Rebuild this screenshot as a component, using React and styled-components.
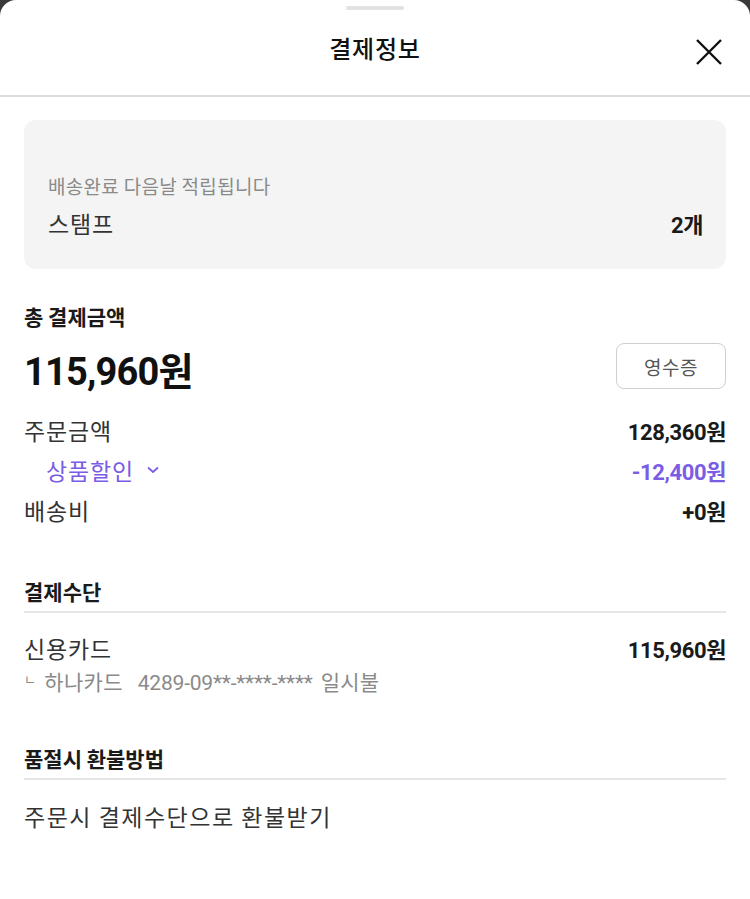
import React from 'react';
import styled, { createGlobalStyle } from 'styled-components';

const GlobalStyle = createGlobalStyle`
  html, body {
    margin: 0;
    padding: 0;
    background: #3a3a3a;
  }
  body {
    font-family: 'Noto Sans CJK KR', 'Noto Sans', sans-serif;
    color: #222;
  }
`

const Sheet = styled.div`
  background: #fff;
  border-radius: 16px 16px 0 0;
  min-height: 899px;
  box-sizing: border-box;
`

const HandleBar = styled.div`
  display: flex;
  justify-content: center;
  padding-top: 6px;
  height: 14px;
  box-sizing: border-box;
`

const Handle = styled.div`
  width: 58px;
  height: 4px;
  border-radius: 2px;
  background: #e2e2e2;
`

const Header = styled.div`
  position: relative;
  display: flex;
  align-items: center;
  justify-content: center;
  height: 81px;
  border-bottom: 2px solid #dcdcdc;
`

const Title = styled.h1`
  margin: 0 0 14px;
  font-size: 24px;
  letter-spacing: 0.8px;
  font-weight: 500;
  color: #111;
`

const CloseButton = styled.button`
  position: absolute;
  right: 26px;
  top: 23px;
  width: 30px;
  height: 30px;
  padding: 0;
  border: 0;
  background: none;
  display: flex;
  align-items: center;
  justify-content: center;
`

const Body = styled.div`
  padding: 23px 24px 0;
`

const StampCard = styled.div`
  background: #f4f4f4;
  border-radius: 12px;
  padding: 54px 23px 31px 24px;
  display: flex;
  flex-direction: column;
  gap: 10px;
`

const Hint = styled.div`
  font-size: 19px;
  line-height: 24px;
  letter-spacing: 0.3px;
  color: #8a8a8a;
`

const Row = styled.div`
  display: flex;
  justify-content: space-between;
  align-items: center;
  height: ${p => p.h || 40}px;
  padding-left: ${p => p.indent || 0}px;
  margin-top: ${p => p.mt || 0}px;
`

const Label = styled.span`
  display: flex;
  align-items: center;
  gap: 13px;
  font-size: 23px;
  letter-spacing: 0.8px;
  color: ${p => p.purple ? '#7b5ce4' : '#333'};
`

const Amount = styled.span`
  font-family: Roboto, 'Noto Sans CJK KR', sans-serif;
  font-size: 22px;
  font-weight: 700;
  letter-spacing: -0.4px;
  color: ${p => p.purple ? '#7b5ce4' : '#1a1a1a'};
`

const SectionTitle = styled.h2`
  margin: ${p => p.mt}px 0 0;
  font-size: 21px;
  line-height: 28px;
  font-weight: 700;
  color: #1a1a1a;
  padding-bottom: ${p => p.line ? '6px' : '0'};
  border-bottom: ${p => p.line ? '2px solid #e6e6e6' : 'none'};
`

const Total = styled.span`
  font-family: Roboto, 'Noto Sans CJK KR', sans-serif;
  font-size: 38px;
  font-weight: 700;
  letter-spacing: -0.8px;
  color: #111;
  padding-top: 4px;
`

const ReceiptButton = styled.button`
  width: 110px;
  height: 46px;
  border: 1px solid #cfcfcf;
  border-radius: 8px;
  background: #fff;
  font-family: 'Noto Sans CJK KR', sans-serif;
  font-size: 19px;
  letter-spacing: 0.5px;
  color: #555;
`

const CardDetail = styled.div`
  margin-top: 2px;
  font-size: 21px;
  line-height: 28px;
  letter-spacing: 0.3px;
  color: #8a8a8a;
  display: flex;
  align-items: baseline;
`

const Corner = styled.span`
  font-size: 13px;
  position: relative;
  top: -6px;
  margin-right: 8px;
`

const CardNumber = styled.span`
  font-family: Roboto, sans-serif;
  font-size: 21px;
  letter-spacing: -0.2px;
  margin: 0 8px 0 15px;
`

const Plain = styled.div`
  font-size: 23px;
  line-height: 34px;
  letter-spacing: 1.5px;
  color: #333;
  margin-top: 19px;
`

const CloseIcon = () => (
  <svg width="28" height="28" viewBox="0 0 28 28">
    <path d="M2 2 L26 26 M26 2 L2 26" stroke="#111" strokeWidth="2.4" fill="none" />
  </svg>
)

const Chevron = () => (
  <svg width="12" height="8" viewBox="0 0 12 8">
    <path d="M1 1.5 L6 6 L11 1.5" stroke="#7b5ce4" strokeWidth="1.8" fill="none" />
  </svg>
)

export default function App() {
  return (
    <Sheet>
      <GlobalStyle />
      <HandleBar><Handle /></HandleBar>
      <Header>
        <Title>결제정보</Title>
        <CloseButton><CloseIcon /></CloseButton>
      </Header>

      <Body>
        <StampCard>
          <Hint>배송완료 다음날 적립됩니다</Hint>
          <Row h={30}>
            <Label>스탬프</Label>
            <Amount>2개</Amount>
          </Row>
        </StampCard>

        <SectionTitle mt={33}>총 결제금액</SectionTitle>
        <Row h={46} mt={13}>
          <Total>115,960원</Total>
          <ReceiptButton>영수증</ReceiptButton>
        </Row>

        <Row mt={21}>
          <Label>주문금액</Label>
          <Amount>128,360원</Amount>
        </Row>
        <Row indent={22}>
          <Label purple>상품할인 <Chevron /></Label>
          <Amount purple>-12,400원</Amount>
        </Row>
        <Row>
          <Label>배송비</Label>
          <Amount>+0원</Amount>
        </Row>

        <SectionTitle mt={47} line>결제수단</SectionTitle>
        <Row h={34} mt={18}>
          <Label>신용카드</Label>
          <Amount>115,960원</Amount>
        </Row>
        <CardDetail>
          <Corner>ㄴ</Corner>하나카드<CardNumber>4289-09**-****-****</CardNumber>일시불
        </CardDetail>

        <SectionTitle mt={45} line>품절시 환불방법</SectionTitle>
        <Plain>주문시 결제수단으로 환불받기</Plain>
      </Body>
    </Sheet>
  )
}
